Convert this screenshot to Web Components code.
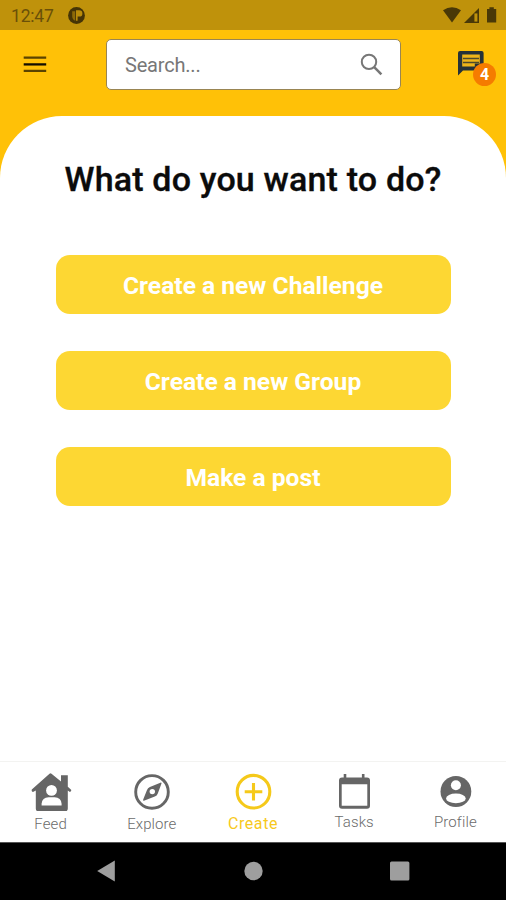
<!DOCTYPE html>
<html lang="en">
<head>
<meta charset="utf-8">
<title>Create</title>
<style>
body { margin: 0; background: #fff; font-family: Roboto, "Liberation Sans", sans-serif; }
</style>
</head>
<body>
<app-screen>
  <status-bar slot="top" time="12:47"></status-bar>
  <app-header slot="top" count="4">Search...</app-header>
  <create-panel>
    <span slot="title">What do you want to do?</span>
    <action-button>Create a new Challenge</action-button>
    <action-button>Create a new Group</action-button>
    <action-button>Make a post</action-button>
  </create-panel>
  <tab-bar slot="bottom">
    <tab-item icon="feed">Feed</tab-item>
    <tab-item icon="explore">Explore</tab-item>
    <tab-item icon="create" active>Create</tab-item>
    <tab-item icon="tasks" raised>Tasks</tab-item>
    <tab-item icon="profile" raised>Profile</tab-item>
  </tab-bar>
  <system-nav slot="bottom"></system-nav>
</app-screen>
<script>
const define = (name, render) => customElements.define(name, class extends HTMLElement {
  constructor() { super(); this.attachShadow({ mode: 'open' }); }
  connectedCallback() { this.shadowRoot.innerHTML = render(this); }
});

define('app-screen', () => `
<style>
  :host { display: flex; flex-direction: column; width: 506px; height: 900px; background: #ffc107; overflow: hidden; }
</style>
<slot name="top"></slot><slot></slot><slot name="bottom"></slot>`);

define('status-bar', el => `
<style>
  :host { display: flex; align-items: center; justify-content: space-between; height: 30px; background: #bf920b; color: #6a5008; font-size: 17.5px; padding: 0 8px 0 11px; box-sizing: border-box; flex: none; }
  .left { display: flex; align-items: center; gap: 14px; }
  .time { line-height: 20px; padding-top: 2px; letter-spacing: -0.2px; }
  svg { display: block; }
</style>
<div class="left"><span class="time">${el.getAttribute('time')}</span>
<svg width="17" height="17" viewBox="0 0 17 17"><circle cx="8.5" cy="8.5" r="8.4" fill="#453406"/><path d="M4.2 4.2h3v9.6Q4.2 12.500 4.200 9z" fill="#8d6a08"/><path d="M8 3.200h3.200a3.200 3.200 0 0 1 0 6.400H9.600v4.200H8z" fill="#b98c0a"/></svg></div>
<svg width="56" height="18" viewBox="0 0 56 18" fill="#493807"><path d="M1 4.2Q10 -1.5 19 4.2L10 16.5z"/><path d="M37 2v15H22z"/><path d="M32.4 7.400h3v8.200h-3z" fill="#bf920b"/><path d="M47.4 1.3h4.4v1.6h2.4v13.7H45V2.9h2.4z"/></svg>`);

define('app-header', el => `
<style>
  :host { display: flex; align-items: flex-start; height: 86px; padding: 9px 0 0 23px; box-sizing: border-box; flex: none; }
  .menu { display: block; margin-top: 16px; margin-right: 59px; }
  .field { display: flex; align-items: center; justify-content: space-between; box-sizing: border-box; width: 295px; height: 51px; margin-right: 57px; border: 1.5px solid #998552; border-radius: 5px; background: #fff; color: #777; font-size: 20px; padding: 0 17px 0 18px; }
  .text { letter-spacing: -0.2px; }
  .messages { position: relative; display: block; width: 40px; height: 40px; margin-top: 12px; }
  .messages svg { display: block; }
  .badge { position: absolute; left: 15px; top: 12px; width: 23px; height: 23px; border-radius: 50%; background: #f57c00; color: #fff; font: 700 16px/24px Roboto, sans-serif; text-align: center; }
</style>
<svg class="menu" width="24" height="20" viewBox="0 0 24 20"><path d="M.7 2.6h22.5M.7 15.8h22.5" stroke="#5b4300" stroke-width="2.3"/><path d="M.7 9.4h22.5" stroke="#130e00" stroke-width="2.3"/></svg>
<div class="field"><span class="text"><slot></slot></span>
<svg width="24" height="24" viewBox="0 0 24 24" fill="none" stroke="#777" stroke-width="2"><circle cx="10" cy="8.900" r="7.2"/><path d="M15.200 14.2l7.2 7.2" stroke-width="2.5"/></svg></div>
<div class="messages"><svg width="26" height="26" viewBox="0 0 26 26"><path d="M2 0h21.6q2 0 2 2v15.6q0 2-2 2H5L0 24.6V2q0-2 2-2z" fill="#263238"/><path d="M4.200 3.600h17.600v9h-5v2.800H4.200z" fill="#eeb51a"/><path d="M5 7.400h16M5 11.400h16" stroke="#4d4a2c" stroke-width="1.500"/></svg><span class="badge">${el.getAttribute('count')}</span></div>`);

define('create-panel', () => `
<style>
  :host { display: flex; flex-direction: column; align-items: center; flex: 1; background: #fff; border-radius: 62px 62px 0 0; padding-top: 43px; box-sizing: border-box; }
  h1 { margin: 0 0 56px; font-size: 34px; line-height: 40px; font-weight: 500; color: #0b0b0b; white-space: nowrap; letter-spacing: 0.18px; -webkit-text-stroke: 0.35px #0b0b0b; }
  .actions { display: flex; flex-direction: column; gap: 37px; width: 395px; }
</style>
<h1><slot name="title"></slot></h1><div class="actions"><slot></slot></div>`);

define('action-button', () => `
<style>
  :host { display: flex; align-items: center; justify-content: center; height: 59px; border-radius: 14px; background: #fdd733; color: #fff; font-size: 24.6px; font-weight: 700; padding-top: 2px; box-sizing: border-box; }
</style>
<slot></slot>`);

define('tab-bar', () => `
<style>
  :host { display: grid; grid-template-columns: repeat(5, 1fr); height: 81px; flex: none; box-sizing: border-box; border-top: 1px solid #f3f3f1; background: #fff; }
</style>
<slot></slot>`);

const icons = {
  feed: `<path d="M19.500 1.800q1-.9 2 0L31 9.600V3.200h6.800v11.600l3.300 3q.6 1.500-1.200 2.200L37.800 18.600V36.500q0 3-3 3h-26q-3 0-3-3V18.600L3 20q-1.800-.7-1.200-2.400z"/><g fill="#fff"><circle cx="21.5" cy="18.4" r="5.4"/><path d="M11.6 33.4v-1.6q.5-6.6 7-6.6h6q6.5 0 7 6.6v1.6z"/></g>`,
  explore: `<circle cx="21" cy="19.9" r="16.3" fill="none" stroke="#666" stroke-width="2.9"/><path d="M30 10.4q.9.2.4 1.4l-3.600 9.600q-.8 2.200-3 3.200l-10.900 4.200q-1.2.1-.7-1.2l3.700-9.400q.8-2.200 3-3.200z"/><circle cx="21.3" cy="19.6" r="2.7" fill="#fff"/>`,
  create: `<g fill="none" stroke="#f5c91a"><circle cx="21.5" cy="19.7" r="16.3" stroke-width="3.1"/><path d="M21.5 10.9v17.6M12.7 19.7h17.6" stroke-width="3.1"/></g>`,
  tasks: `<path fill-rule="evenodd" d="M9 5.5h1.7V2h2.6v3.5h15.6V2h2.6v3.5H34q3 0 3 3v25.2q0 3-3 3H9q-3 0-3-3V8.5q0-3 3-3zM8.7 12.3v21.5h25.6V12.3z"/>`,
  profile: `<circle cx="21.900" cy="19.5" r="15.4"/><g fill="#fff"><circle cx="21.900" cy="13.2" r="5"/><ellipse cx="21.900" cy="26.4" rx="9.8" ry="4.9"/></g>`
};

define('tab-item', el => `
<style>
  :host { display: flex; flex-direction: column; align-items: center; padding-top: 10px; box-sizing: border-box; color: #6b6b6b; font-size: 15px; font-weight: 300; letter-spacing: 0.1px; }
  :host([active]) { color: #f7c91c; font-size: 16px; font-weight: 400; letter-spacing: 0.6px; }
  svg { display: block; fill: #666; }
  .label { line-height: 18px; margin-top: 4px; }
  :host([raised]) .label { margin-top: 2px; }
</style>
<svg width="42" height="39" viewBox="0 0 42 39">${icons[el.getAttribute('icon')]}</svg>
<span class="label"><slot></slot></span>`);

define('system-nav', () => `
<style>
  :host { display: grid; grid-template-columns: repeat(3, 146.5px); justify-content: center; justify-items: center; align-items: center; height: 58px; flex: none; background: #000; border-top: 1px solid #555; box-sizing: border-box; padding-bottom: 1px; }
  svg { display: block; fill: #9e9e9e; }
</style>
<svg width="20" height="22" viewBox="0 0 20 22"><path d="M17.8 .6v20.8L.2 11z"/></svg>
<svg width="20" height="20" viewBox="0 0 20 20"><circle cx="10.5" cy="10" r="9.2"/></svg>
<svg width="20" height="20" viewBox="0 0 20 20"><rect x="0" y=".4" width="19.4" height="19.2" rx="1.5"/></svg>`);
</script>
</body>
</html>
